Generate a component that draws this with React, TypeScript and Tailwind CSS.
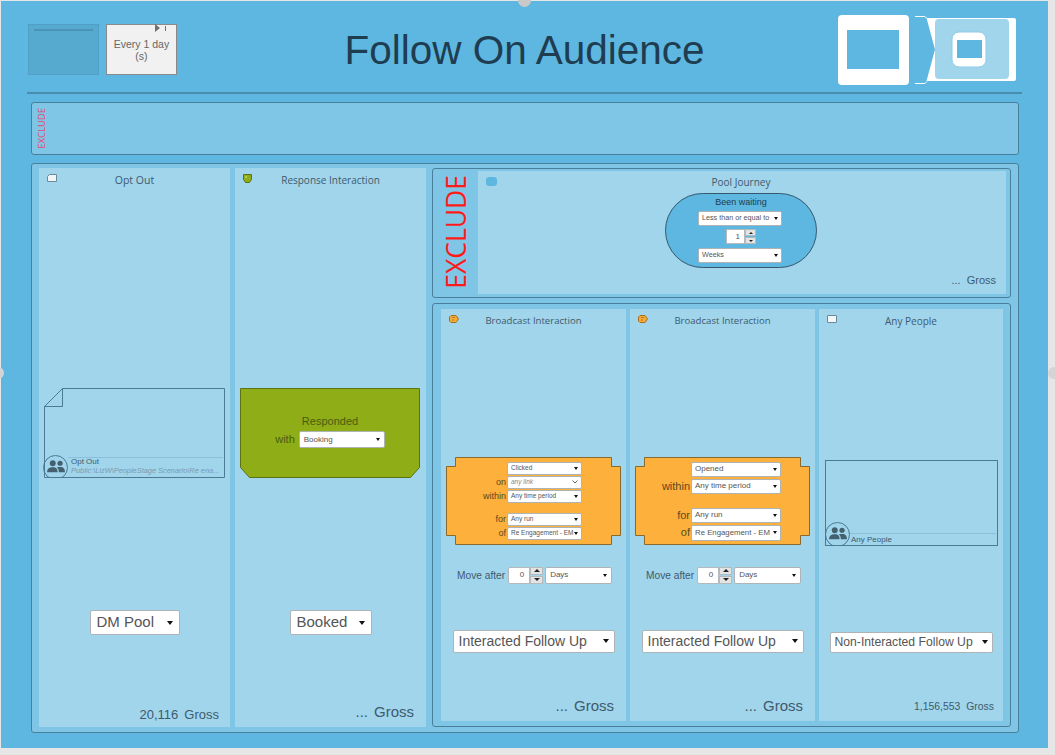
import React from 'react';

const SANS = "font-['Liberation_Sans',Arial,sans-serif]";
const OPEN = "font-['Open_Sans',sans-serif]";

// dropdown look, the native select draws differently in headless
const Select = ({ label, className, italic, tiny }: { label: string; className: string; italic?: boolean; tiny?: boolean }) => (
  <div className={`flex items-center justify-between bg-white rounded-[2px] border border-[#aeb3b6] whitespace-nowrap ${SANS} ${italic ? 'italic text-[#888]' : 'text-[#555]'} ${className}`}>
    <span>{label}</span>
    {italic ? (
      <svg width="6" height="4" viewBox="0 0 6 4" className="shrink-0">
        <path d="M.5.5 3 3 5.500.5" fill="none" stroke="#666" />
      </svg>
    ) : tiny ? (
      <span className="w-0 h-0 border-x-[2px] border-x-transparent border-t-[3px] border-t-[#111] shrink-0" />
    ) : (
      <span className="w-0 h-0 border-x-[3px] border-x-transparent border-t-[4px] border-t-[#111] shrink-0" />
    )}
  </div>
);

const Stepper = ({ value }: { value: string }) => (
  <div className="flex items-stretch w-[35px] h-[17px]">
    <div className={`flex-1 bg-white rounded-l-[2px] border border-[#b4b9bc] text-[8px] text-[#555] flex items-center justify-end pr-[5px] ${SANS}`}>{value}</div>
    <div className="w-[13px] flex flex-col gap-px">
      <div className="flex-1 bg-[#e4e4e4] border border-[#b4b9bc] flex items-center justify-center">
        <span className="w-0 h-0 border-x-[3px] border-x-transparent border-b-[3px] border-b-[#222]" />
      </div>
      <div className="flex-1 bg-[#e4e4e4] border border-[#b4b9bc] flex items-center justify-center">
        <span className="w-0 h-0 border-x-[3px] border-x-transparent border-t-[3px] border-t-[#222]" />
      </div>
    </div>
  </div>
);

const Gross = ({ count, className }: { count: string; className?: string }) => (
  <div className={`flex justify-end gap-[6px] text-[#3f5a6c] ${SANS} ${className ?? ''}`}>
    <span>{count}</span>
    <span>Gross</span>
  </div>
);

const PeopleIcon = () => (
  <svg viewBox="0 0 22 16" className="w-[18px] h-[13px]" fill="#44606f">
    <circle cx="7" cy="4" r="3.600" />
    <path d="M0 15c0-4 3-5.500 5-6h4c2 .5 4 2 4 6z" />
    <circle cx="16" cy="4" r="3.200" />
    <path d="M14.500 15c0-3-.8-4.500-2.500-5.800l2-.7h4c2 .5 4 2 4 6.500z" />
  </svg>
);

const PeopleBadge = () => (
  <div className="absolute left-[-1px] bottom-0 w-[25px] h-[23px] overflow-hidden">
    <div className="w-[25px] h-[25px] rounded-full border border-[#4a7a94] flex items-center justify-center pb-[2px]">
      <PeopleIcon />
    </div>
  </div>
);

const Column = ({ title, icon, width, titleSize, children }: { title: string; icon: React.ReactNode; width: string; titleSize: string; children: React.ReactNode }) => (
  <div className={`relative flex flex-col bg-[#a0d5ec] ${width}`}>
    <div className="absolute left-[8px] top-[6px]">{icon}</div>
    <div className={`h-[25px] flex items-center justify-center text-[#3f5a6c] ${titleSize} ${OPEN}`}>{title}</div>
    {children}
  </div>
);

const DocIcon = () => (
  <svg width="10" height="8" viewBox="0 0 10 8">
    <path d="M2.500.5h7v7H.5V2.500z" fill="#f2f5f6" stroke="#6a8a9c" />
  </svg>
);
const CupIcon = () => (
  <svg width="9" height="9" viewBox="0 0 9 9">
    <path d="M.5.5h8v5l-2 3h-4l-2-3z" fill="#8fad17" stroke="#5d7212" />
    <circle cx="3" cy="3" r="1" fill="#c7d26a" />
  </svg>
);
const TagIcon = () => (
  <svg width="10" height="8" viewBox="0 0 10 8">
    <path d="M2 .5h5l2.500 3.500L7 7.500H2L.5 6V2z" fill="#f5ab38" stroke="#a8701e" />
    <path d="M3 2.500h3M3 5h2" stroke="#a8701e" strokeWidth=".8" />
  </svg>
);
const BoxIcon = () => <div className="w-[10px] h-[8px] rounded-[1px] bg-[#f2f5f6] border border-[#6a8a9c]" />;

const OrangeShape = ({ children }: { children: React.ReactNode }) => (
  <div className="relative w-[175px] h-[88px]">
    <svg className="absolute inset-0" width="175" height="88" viewBox="0 0 175 88">
      <path d="M9.500.5h156v9h9v69h-9v9H9.500v-9h-9v-69h9z" fill="#fdb03b" stroke="#8a6a2c" />
    </svg>
    <div className="relative h-full">{children}</div>
  </div>
);

const Row = ({ label, className, children }: { label?: string; className?: string; children: React.ReactNode }) => (
  <div className={`flex items-center justify-end ${className ?? ''}`}>
    <span className={`text-[#5b4a20] pr-px ${SANS}`}>{label}</span>
    {children}
  </div>
);

const MoveAfter = ({ className }: { className: string }) => (
  <div className={`flex items-center ${className}`}>
    <span className={`text-[10.200px] text-[#3f5a6c] mr-[3px] ${SANS}`}>Move after</span>
    <Stepper value="0" />
    <Select label="Days" tiny className="w-[67px] h-[17px] text-[8px] px-[4px] ml-[2px]" />
  </div>
);

const TopLogo = () => (
  <svg width="178" height="72" viewBox="0 0 178 72">
    <rect x="0" y="1" width="71" height="70" rx="4" fill="#fff" />
    <rect x="9" y="16" width="52" height="39" fill="#5eb7e0" />
    <path d="M77 2.500h10l2 2M77 69.500h10l2-2" fill="none" stroke="#fff" />
    <path d="M88.500 4H176a2 2 0 0 1 2 2v59a2 2 0 0 1-2 2H88.500l8.500-31.500z" fill="#fff" />
    <rect x="97" y="5" width="74" height="60" rx="4" fill="#a0d5ec" />
    <rect x="114" y="18" width="34" height="35" rx="7" fill="#fff" stroke="#8ccbe9" />
    <rect x="119" y="26" width="25" height="18" fill="#5eb7e0" />
  </svg>
);

export default function App() {
  return (
    <div className="w-[1055px] h-[755px] bg-[#e6e6e6] overflow-hidden relative pt-px pl-px">
      <div className="w-[1047px] h-[747px] bg-[#5eb7e0] relative">
        {/* header */}
        <div className="h-[91px] grid grid-cols-[1fr_auto_1fr] items-start">
          <div className="flex gap-[7px] pl-[27px] pt-[23px]">
            <div className="w-[71px] h-[51px] bg-[#56a9cf] border border-[#50a0c6] px-[5px] pt-[4px]">
              <div className="h-[2px] bg-[#4a93b6]" />
            </div>
            <div className={`relative w-[71px] h-[51px] bg-[#f1f1f1] border border-[#8a8a8a] flex items-center justify-center text-center text-[10.500px] leading-[12px] text-[#666] ${SANS}`}>
              <div>Every 1 day<br />(s)</div>
              <div className="absolute right-[10px] top-[-1px] flex items-center gap-[5px]">
                <span className="w-0 h-0 border-y-[4px] border-y-transparent border-l-[5px] border-l-[#6f6f6f]" />
                <span className="w-px h-[5px] bg-[#6f6f6f]" />
              </div>
            </div>
          </div>
          <div className={`text-[40.500px] leading-[52px] pt-[23px] text-[#1f3d50] ${SANS}`}>Follow On Audience</div>
          <div className="flex justify-end pr-[32px] pt-[13px]">
            <TopLogo />
          </div>
        </div>
        <div className="h-[2px] bg-[#4a8cab] ml-[26px] w-[995px]" />

        {/* exclude strip */}
        <div className="ml-[30px] mt-[8px] w-[988px] h-[53px] bg-[#7fc5e6] border border-[#4a7f9c] rounded-[3px] flex items-center pl-[4px]">
          <span className={`[writing-mode:vertical-rl] rotate-180 text-[9.500px] leading-[11px] text-[#e8456e] ${OPEN}`}>EXCLUDE</span>
        </div>

        {/* main */}
        <div className="ml-[30px] mt-[8px] w-[988px] h-[570px] bg-[#7fc5e6] border border-[#4a7f9c] rounded-[3px] flex pl-[7px] pt-[4px] pb-[5px]">
          <Column title="Opt Out" icon={<DocIcon />} width="w-[191px]" titleSize="text-[10.500px]">
            <div className="relative ml-[5px] mt-[195px] w-[181px] h-[90px]">
              <svg className="absolute inset-0" width="181" height="90" viewBox="0 0 181 90">
                <path d="M18.500.5h162v89H.5V18.500zM18.500.5v18H.5" fill="none" stroke="#4a7a94" />
              </svg>
              <div className="absolute left-[24px] right-[2px] bottom-[20px] h-px bg-[#8cc0da]" />
              <PeopleBadge />
              <div className={`absolute left-[27px] bottom-[3px] leading-[9px] ${SANS}`}>
                <div className="text-[8px] text-[#3f5a6c]">Opt Out</div>
                <div className="text-[7.400px] italic text-[#7b9aac] whitespace-nowrap">Public:\LizW\PeopleStage Scenario\Re ena...</div>
              </div>
            </div>
            <div className="flex justify-center mt-[132px]">
              <Select label="DM Pool" className="w-[90px] h-[25px] text-[15px] px-[6px]" />
            </div>
            <Gross count="20,116" className="mt-auto pb-[3px] pr-[11px] text-[13px]" />
          </Column>

          <Column title="Response Interaction" icon={<CupIcon />} width="w-[191px] ml-[5px]" titleSize="text-[10px]">
            <div className="relative ml-[5px] mt-[195px] w-[180px] h-[90px]">
              <svg className="absolute inset-0" width="180" height="90" viewBox="0 0 180 90">
                <path d="M.5.5h179v79l-9 10H9.500l-9-10z" fill="#8fad17" stroke="#5d7212" />
              </svg>
              <div className={`relative flex flex-col items-center pt-[26px] text-[11px] text-[#4b5c0f] ${SANS}`}>
                <div className="h-[14px] leading-[14px]">Responded</div>
                <div className="flex items-center mt-[3px]">
                  <span className="mr-[4px]">with</span>
                  <Select label="Booking" tiny className="w-[86px] h-[17px] text-[8px] px-[4px]" />
                </div>
              </div>
            </div>
            <div className="flex justify-center mt-[132px]">
              <Select label="Booked" className="w-[82px] h-[25px] text-[15px] px-[6px]" />
            </div>
            <Gross count="..." className="mt-auto pb-[4px] pr-[12px] text-[15px]" />
          </Column>

          <div className="ml-[6px] w-[579px] flex flex-col">
            {/* pool journey */}
            <div className="h-[130px] bg-[#7fc5e6] border border-[#4a7f9c] rounded-[3px] flex pt-[2px] pb-[3px] pr-[4px]">
              <div className="w-[45px] flex items-center justify-center">
                <span className={`[writing-mode:vertical-rl] rotate-180 text-[26.500px] leading-[30px] text-[#ff1a1a] ${OPEN}`}>EXCLUDE</span>
              </div>
              <div className="relative flex-1 bg-[#a0d5ec] flex flex-col items-center">
                <div className="absolute left-[8px] top-[6px] w-[11px] h-[9px] rounded-[3px] bg-[#5eb7e0]" />
                <div className={`h-[22px] flex items-center justify-center text-[10px] text-[#3f5a6c] mr-[2px] ${OPEN}`}>Pool Journey</div>
                <div className="w-[152px] h-[75px] mr-[2px] rounded-full bg-[#5eb7e0] border border-[#35586c] flex flex-col items-center">
                  <div className={`h-[17px] flex items-center text-[9px] text-[#1f3d50] ${SANS}`}>Been waiting</div>
                  <Select label="Less than or equal to" tiny className="w-[84px] h-[15px] mr-[2px] text-[7.200px] px-[3px]" />
                  <div className="flex items-stretch w-[30px] h-[15px] mt-[3px]">
                    <div className={`flex-1 bg-white border border-[#b4b9bc] text-[8px] text-[#555] flex items-center justify-end pr-[4px] ${SANS}`}>1</div>
                    <div className="w-[11px] flex flex-col gap-px">
                      <div className="flex-1 bg-[#e4e4e4] border border-[#b4b9bc] flex items-center justify-center"><span className="w-0 h-0 border-x-[2px] border-x-transparent border-b-[2px] border-b-[#222]" /></div>
                      <div className="flex-1 bg-[#e4e4e4] border border-[#b4b9bc] flex items-center justify-center"><span className="w-0 h-0 border-x-[2px] border-x-transparent border-t-[2px] border-t-[#222]" /></div>
                    </div>
                  </div>
                  <Select label="Weeks" tiny className="w-[84px] h-[15px] mr-[2px] text-[7.200px] px-[3px] mt-[4px]" />
                </div>
                <Gross count="..." className="mt-auto self-end pb-[5px] pr-[10px] text-[11px]" />
              </div>
            </div>

            {/* lower block */}
            <div className="mt-[5px] h-[425px] bg-[#7fc5e6] border border-[#4a7f9c] rounded-[3px] flex pl-[8px] pt-[5px] pb-[5px] gap-[4px]">
              <Column title="Broadcast Interaction" icon={<TagIcon />} width="w-[185px]" titleSize="text-[9.600px]">
                <div className="ml-[5px] mt-[123px]">
                  <OrangeShape>
                    <div className="flex flex-col pt-[5px] pr-[39px] text-[9px] leading-none">
                      <Row><Select label="Clicked" tiny className="w-[75px] h-[13px] text-[6.500px] px-[3px]" /></Row>
                      <Row label="on" className="mt-[1px]"><Select label="any link" italic className="w-[75px] h-[13px] text-[6.500px] px-[3px]" /></Row>
                      <Row label="within" className="mt-[1px]"><Select label="Any time period" tiny className="w-[75px] h-[13px] text-[6.500px] px-[3px]" /></Row>
                      <Row label="for" className="mt-[10px]"><Select label="Any run" tiny className="w-[75px] h-[13px] text-[6.500px] px-[3px]" /></Row>
                      <Row label="of" className="mt-[1px]"><Select label="Re Engagement - EM" tiny className="w-[75px] h-[13px] text-[6.500px] px-[3px]" /></Row>
                    </div>
                  </OrangeShape>
                </div>
                <MoveAfter className="ml-[16px] mt-[22px]" />
                <div className="flex justify-center mt-[46px]">
                  <Select label="Interacted Follow Up" className="w-[162px] h-[23px] text-[14px] px-[5px]" />
                </div>
                <Gross count="..." className="mt-auto pb-[4px] pr-[12px] text-[15px]" />
              </Column>

              <Column title="Broadcast Interaction" icon={<TagIcon />} width="w-[185px]" titleSize="text-[9.600px]">
                <div className="ml-[5px] mt-[123px]">
                  <OrangeShape>
                    <div className="flex flex-col pt-[5px] pr-[29px] text-[11px] leading-none">
                      <Row><Select label="Opened" tiny className="w-[90px] h-[15px] text-[8px] px-[3px]" /></Row>
                      <Row label="within" className="mt-[2px]"><Select label="Any time period" tiny className="w-[90px] h-[15px] text-[8px] px-[3px]" /></Row>
                      <Row label="for" className="mt-[14px]"><Select label="Any run" tiny className="w-[90px] h-[15px] text-[8px] px-[3px]" /></Row>
                      <Row label="of" className="mt-[2px]"><Select label="Re Engagement - EM" tiny className="w-[90px] h-[16px] text-[7.800px] px-[3px]" /></Row>
                    </div>
                  </OrangeShape>
                </div>
                <MoveAfter className="ml-[16px] mt-[22px]" />
                <div className="flex justify-center mt-[46px]">
                  <Select label="Interacted Follow Up" className="w-[162px] h-[23px] text-[14px] px-[5px]" />
                </div>
                <Gross count="..." className="mt-auto pb-[4px] pr-[12px] text-[15px]" />
              </Column>

              <Column title="Any People" icon={<BoxIcon />} width="w-[184px]" titleSize="text-[10px]">
                <div className="relative ml-[6px] mt-[126px] w-[173px] h-[86px] border border-[#4a7a94]">
                  <div className="absolute left-[22px] right-[1px] bottom-[11px] h-px bg-[#8cc0da]" />
                  <PeopleBadge />
                  <div className={`absolute left-[25px] bottom-[1px] text-[8px] leading-[9px] text-[#3f5a6c] ${SANS}`}>Any People</div>
                </div>
                <div className="flex justify-center mt-[86px]">
                  <Select label="Non-Interacted Follow Up" className="w-[163px] h-[21px] text-[12.200px] px-[4px]" />
                </div>
                <Gross count="1,156,553" className="mt-auto pb-[6px] pr-[9px] text-[10.400px]" />
              </Column>
            </div>
          </div>
        </div>
      </div>
      {/* resize handles sit over the panel edge */}
      <div className="absolute left-[518px] top-[-6px] w-[13px] h-[13px] rounded-full bg-[#c9c9c9]" />
      <div className="absolute left-[-8px] top-[367px] w-[12px] h-[12px] rounded-full bg-[#d4d4d4]" />
      <div className="absolute right-[-1px] top-[367px] w-[8px] h-[12px] rounded-l-full bg-[#d4d4d4]" />
    </div>
  );
}
